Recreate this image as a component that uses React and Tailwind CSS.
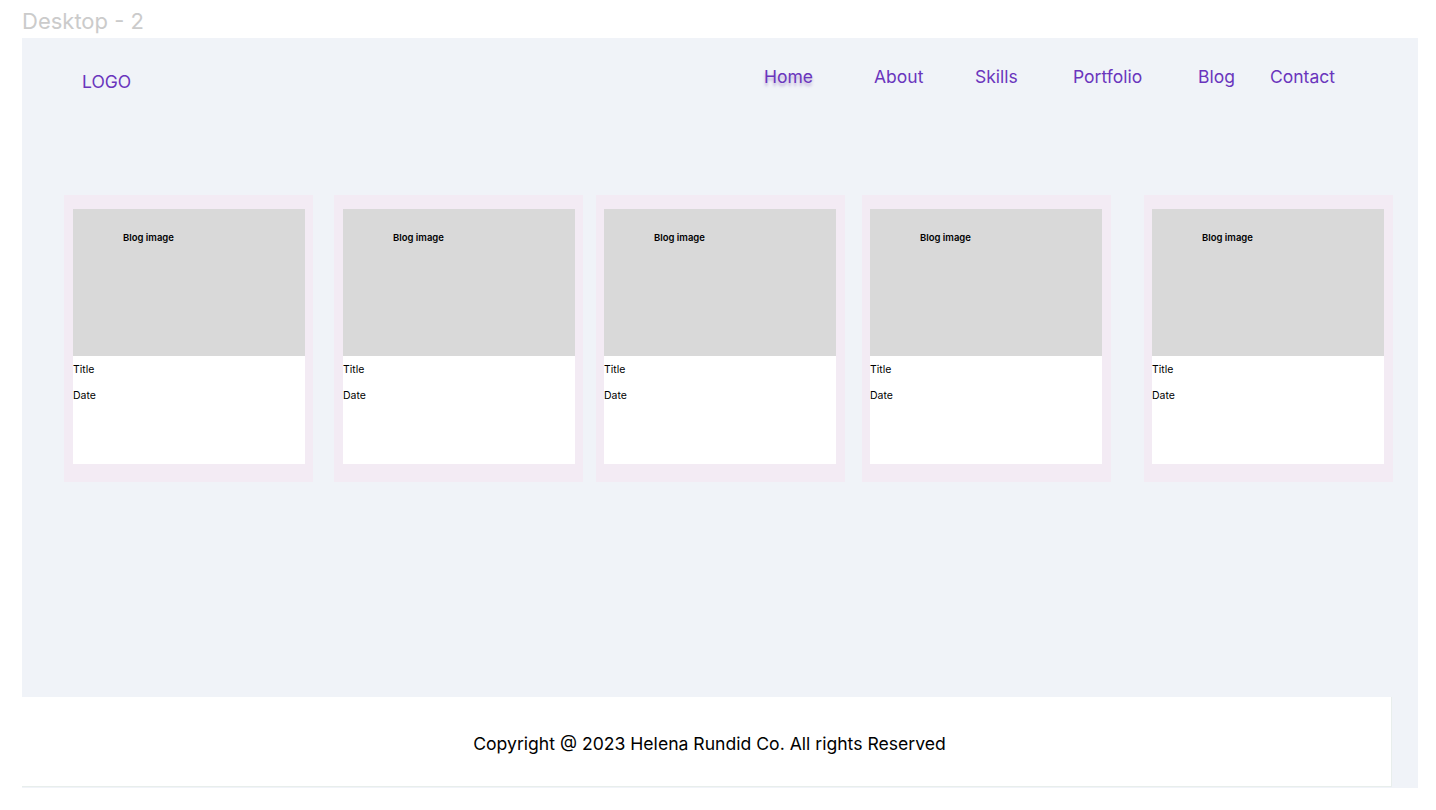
import React from "react";

const font = { fontFamily: "Inter, 'Noto Sans', sans-serif" };

function Card({ className, pad }) {
  return (
    <div className={`w-[249px] h-[287px] bg-[#f3ebf4] pt-[14px] shrink-0 ${pad} ${className}`}>
      <div className="w-[232px] h-[255px] bg-white flex flex-col">
        <div className="h-[147px] bg-[#d9d9d9] pl-[50px] pt-[23px]">
          <span className="text-[9.5px] font-semibold text-black leading-[12px] block">Blog image</span>
        </div>
        <div className="pt-[7px] text-[10.5px] leading-[13px] text-black">
          <div>Title</div>
          <div className="mt-[13px]">Date</div>
        </div>
      </div>
    </div>
  );
}

const nav = [
  { label: "Home", w: "w-[110px]", shadow: true },
  { label: "About", w: "w-[101px]" },
  { label: "Skills", w: "w-[98px]" },
  { label: "Portfolio", w: "w-[125px]" },
  { label: "Blog", w: "w-[72px]" },
  { label: "Contact", w: "w-[80px]" },
];

export default function App() {
  return (
    <div className="w-[1436px] h-[810px] bg-white" style={font}>
      <div className="h-[38px] pl-[22px] pt-[7px] text-[22px] leading-[28px] text-[#cbcbcb]">Desktop - 2</div>
      <div className="ml-[22px] w-[1396px] h-[750px] bg-[#f0f3f8] flex flex-col">
        <div className="h-[157px] flex items-start shrink-0">
          <div className="w-[742px] pl-[60px] pt-[34px] text-[17.5px] leading-[20px] text-[#6a35bd]">LOGO</div>
          <div className="flex pt-[29px]">
            {nav.map((n) => (
              <div key={n.label} className={`${n.w} text-[17.5px] leading-[20px] text-[#6a35bd]`}>
                <span className={n.shadow ? "[text-shadow:0_3px_3px_rgba(90,40,150,0.35)]" : ""}>{n.label}</span>
              </div>
            ))}
          </div>
        </div>
        <div className="flex pl-[42px] shrink-0">
          <Card pad="pl-[9px]" className="" />
          <Card pad="pl-[9px]" className="ml-[21px]" />
          <Card pad="pl-[8px]" className="ml-[13px]" />
          <Card pad="pl-[8px]" className="ml-[17px]" />
          <Card pad="pl-[8px]" className="ml-[33px]" />
        </div>
        <div className="flex-1" />
        <div className="w-[1370px] h-[90px] bg-white border-b border-r border-[#e8eeec] flex items-center justify-center shrink-0 mb-[1px] pt-[4px]">
          <span className="text-[17.6px] text-black leading-[22px] ml-[6px]">Copyright @ 2023 Helena Rundid Co. All rights Reserved</span>
        </div>
      </div>
    </div>
  );
}
